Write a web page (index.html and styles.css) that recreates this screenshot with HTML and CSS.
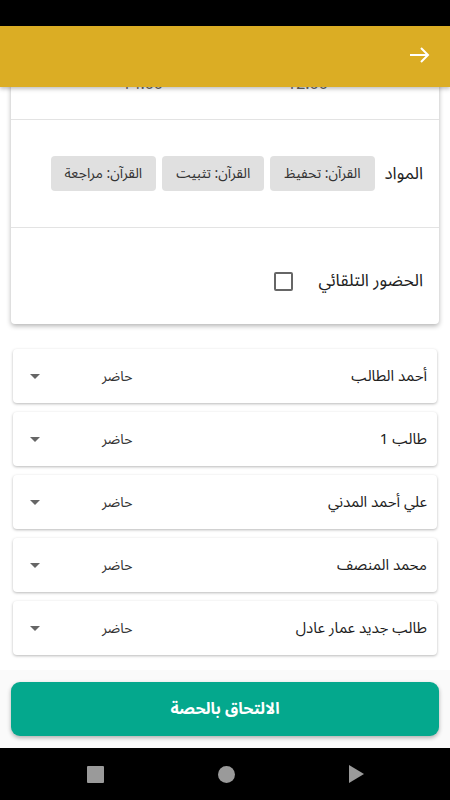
FILE: index.html
```html
<!DOCTYPE html>
<html lang="ar" dir="rtl">
<head>
    <meta charset="UTF-8">
    <meta name="viewport" content="width=device-width, initial-scale=1.0">
    <title>الالتحاق بالحصة</title>
    <link rel="stylesheet" href="styles.css">
</head>
<body>
<div class="phone">
    <div class="status-bar"></div>

    <header class="app-bar">
        <button class="back-btn" aria-label="رجوع">
            <svg width="24" height="24" viewBox="0 0 24 24" fill="none" stroke="#fff" stroke-width="2">
                <path d="M3 12h18M14 5l7 7-7 7"/>
            </svg>
        </button>
    </header>

    <main class="content">
        <!-- بطاقة معلومات الحصة -->
        <section class="session-card">
            <div class="card-row time-row">
                <span class="time">12:00</span>
                <span class="time">14:00</span>
            </div>
            <div class="card-row subjects-row">
                <span class="row-label">المواد</span>
                <div class="chips">
                    <span class="chip">القرآن: تحفيظ</span>
                    <span class="chip">القرآن: تثبيت</span>
                    <span class="chip">القرآن: مراجعة</span>
                </div>
            </div>
            <div class="card-row auto-row">
                <span class="row-label">الحضور التلقائي</span>
                <span class="checkbox"></span>
            </div>
        </section>

        <!-- قائمة الطلاب -->
        <ul class="students">
            <li class="student">
                <span class="student-name">أحمد الطالب</span>
                <span class="status-select">حاضر <i class="caret"></i></span>
            </li>
            <li class="student">
                <span class="student-name">طالب 1</span>
                <span class="status-select">حاضر <i class="caret"></i></span>
            </li>
            <li class="student">
                <span class="student-name">علي أحمد المدني</span>
                <span class="status-select">حاضر <i class="caret"></i></span>
            </li>
            <li class="student">
                <span class="student-name">محمد المنصف</span>
                <span class="status-select">حاضر <i class="caret"></i></span>
            </li>
            <li class="student">
                <span class="student-name">طالب جديد عمار  عادل</span>
                <span class="status-select">حاضر <i class="caret"></i></span>
            </li>
        </ul>
    </main>

    <footer class="bottom-area">
        <button class="join-btn">الالتحاق بالحصة</button>
    </footer>

    <nav class="nav-bar">
        <span class="nav-square"></span>
        <span class="nav-circle"></span>
        <span class="nav-play"></span>
    </nav>
</div>
</body>
</html>
```

FILE: styles.css
```css
* {
    margin: 0;
    padding: 0;
    box-sizing: border-box;
    font-family: "Noto Sans Arabic", "Noto Sans", "DejaVu Sans", sans-serif;
}

body {
    background: #fff;
}

.phone {
    width: 450px;
    height: 800px;
    display: flex;
    flex-direction: column;
    overflow: hidden;
}

.status-bar {
    height: 26px;
    background: #000;
    flex-shrink: 0;
}

.app-bar {
    height: 61px;
    flex-shrink: 0;
    background: #dbad24;
    display: flex;
    align-items: center;
    padding: 0 19px;
    position: relative;
    z-index: 2;
    box-shadow: 0 2px 4px rgba(0, 0, 0, 0.25);
}

.back-btn {
    background: none;
    border: none;
    width: 24px;
    height: 24px;
    display: flex;
    margin-top: -4px;
}

.content {
    flex: 1;
    overflow: hidden;
    background: #fff;
}

.session-card {
    margin: -32px 11px 0;
    background: #fff;
    border-radius: 0 0 4px 4px;
    box-shadow: 0 2px 5px rgba(0, 0, 0, 0.3);
}

.card-row {
    display: flex;
    align-items: center;
    padding: 0 16px;
    border-bottom: 1px solid #e3e3e3;
}

.card-row:last-child {
    border-bottom: none;
}

.time-row {
    height: 65px;
    align-items: flex-start;
    justify-content: center;
    gap: 124px;
    padding-top: 12px;
}

.time {
    font-size: 16px;
    color: #666;
}

.subjects-row {
    height: 108px;
    gap: 10px;
}

.row-label {
    font-size: 17px;
    color: #212121;
}

.chips {
    display: flex;
    gap: 6px;
}

.chip {
    background: #e0e0e0;
    border-radius: 4px;
    height: 35px;
    padding: 0 14px;
    display: flex;
    align-items: center;
    font-size: 14px;
    color: #333;
}

.auto-row {
    height: 96px;
    gap: 26px;
    padding-top: 10px;
}

.checkbox {
    width: 19px;
    height: 19px;
    border: 2px solid #666;
    border-radius: 2px;
}

.students {
    list-style: none;
    padding: 25px 13px 0;
    display: flex;
    flex-direction: column;
    gap: 9px;
}

.student {
    height: 54px;
    display: flex;
    align-items: center;
    justify-content: space-between;
    padding: 0 10px 0 17px;
    background: #fff;
    border-radius: 4px;
    box-shadow: 0 1px 3px rgba(0, 0, 0, 0.28);
}

.student-name {
    font-size: 15px;
    color: #212121;
}

.status-select {
    display: flex;
    align-items: center;
    gap: 62px;
    font-size: 14px;
    color: #333;
}

.caret {
    width: 0;
    height: 0;
    border-left: 5px solid transparent;
    border-right: 5px solid transparent;
    border-top: 5px solid #666;
}

.bottom-area {
    height: 78px;
    flex-shrink: 0;
    background: #fafafa;
    padding: 12px 11px;
}

.join-btn {
    width: 100%;
    height: 54px;
    border: none;
    border-radius: 9px;
    background: #04a88d;
    color: #fff;
    font-size: 16px;
    font-weight: bold;
    box-shadow: 0 2px 4px rgba(0, 0, 0, 0.3);
}

.nav-bar {
    height: 52px;
    flex-shrink: 0;
    background: #000;
    display: flex;
    align-items: center;
    justify-content: space-between;
    padding: 0 86px 0 87px;
    direction: ltr;
}

.nav-square {
    width: 17px;
    height: 17px;
    background: #9a9a9a;
    border-radius: 1px;
}

.nav-circle {
    width: 17px;
    height: 17px;
    background: #9a9a9a;
    border-radius: 50%;
}

.nav-play {
    width: 0;
    height: 0;
    border-top: 9px solid transparent;
    border-bottom: 9px solid transparent;
    border-left: 15px solid #9a9a9a;
}
```
